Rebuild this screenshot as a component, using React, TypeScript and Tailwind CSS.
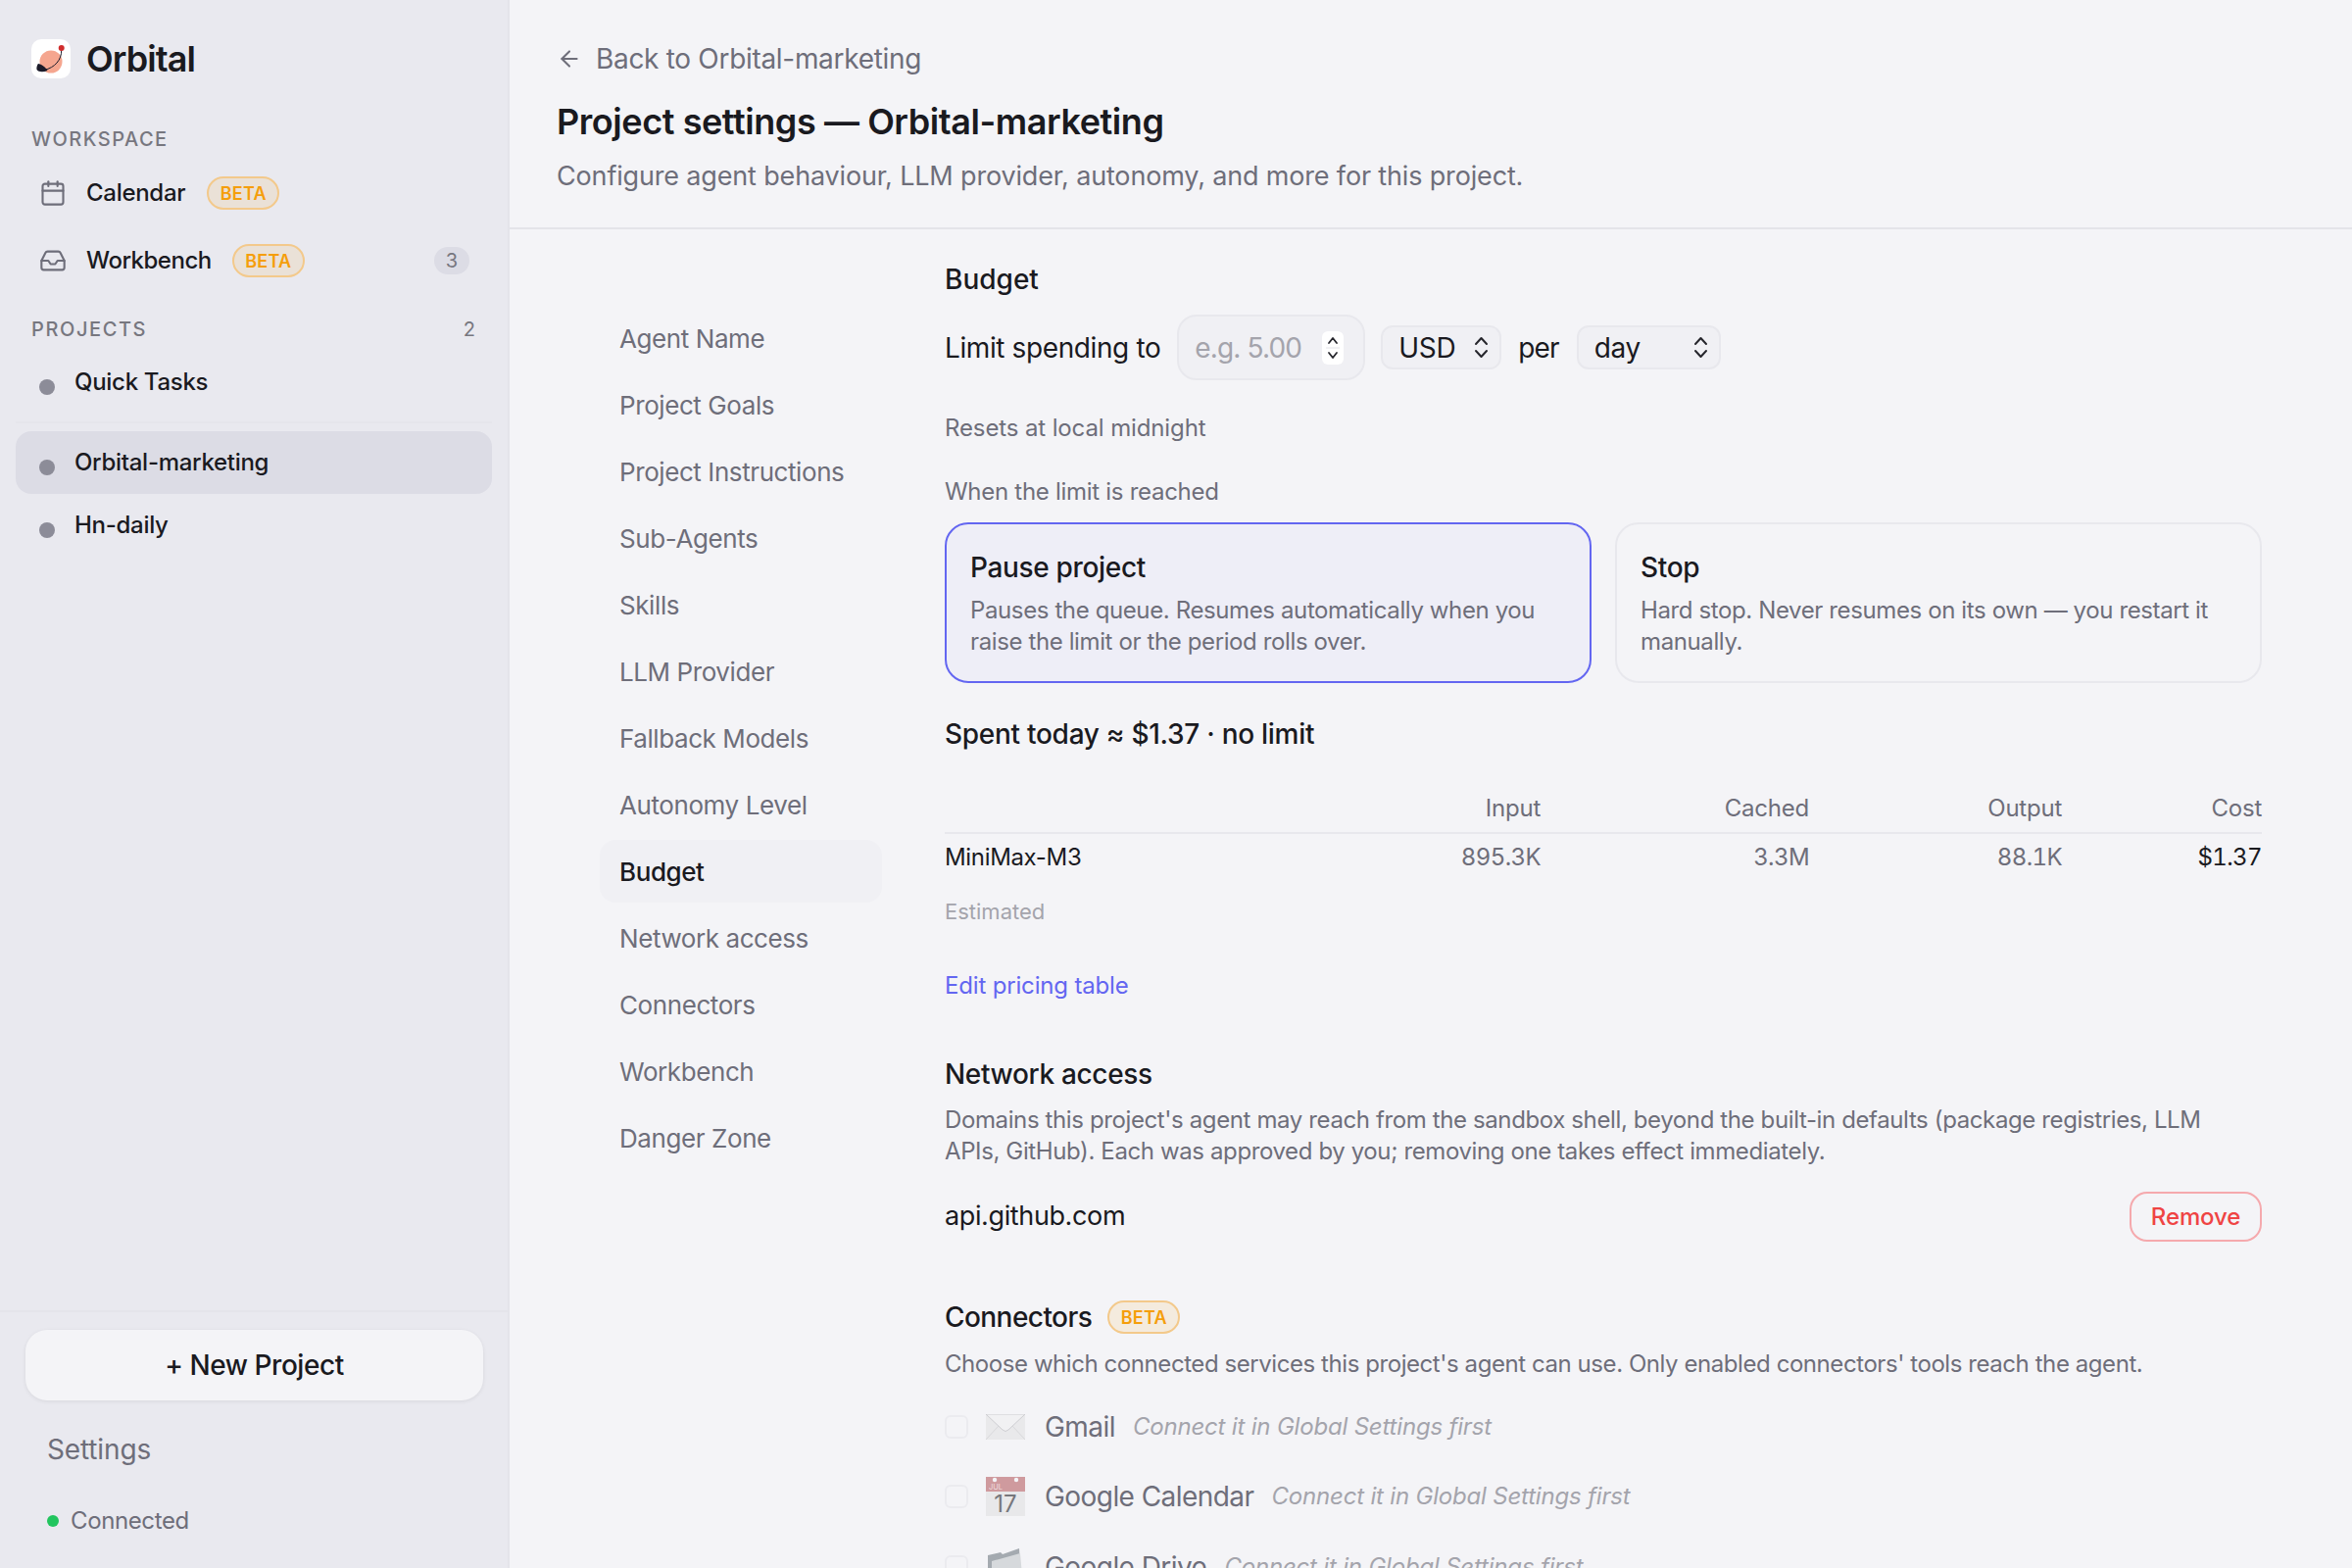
function Beta() {
  return (
    <span className="inline-flex h-[34px] w-[74px] items-center justify-center rounded-full border-2 border-[#f3c98b] bg-[#f59e0b]/10 text-[18px] font-semibold tracking-[0.01em] text-[#f59e0b]">
      BETA
    </span>
  );
}

function Logo() {
  return (
    <div className="h-10 w-10 shrink-0 rounded-[10px] bg-white">
      <svg viewBox="0 0 40 40" className="h-10 w-10">
        <circle cx="20" cy="23" r="11.5" fill="#f5a68f" />
        <path d="M30.7 11 C31 21 24 29 13 31.5" fill="none" stroke="#1b1b2a" strokeWidth="1" />
        <path d="M7 25 C10 25 15 29 16.5 32 C12 34 7 33.5 5.5 31 C5 29 6 26 7 25 Z" fill="#1b1b2a" />
        <circle cx="30.7" cy="9" r="3" fill="#d02c2c" />
      </svg>
    </div>
  );
}

function CalendarGlyph() {
  return (
    <svg viewBox="0 0 24 24" width="28" height="28" fill="none" stroke="#6e6e7a" strokeWidth="1.8" strokeLinecap="round" strokeLinejoin="round">
      <path d="M8 2v4" />
      <path d="M16 2v4" />
      <rect x="3" y="4" width="18" height="18" rx="2" />
      <path d="M3 10h18" />
    </svg>
  );
}

function InboxGlyph() {
  return (
    <svg viewBox="0 0 24 24" width="28" height="28" fill="none" stroke="#6e6e7a" strokeWidth="1.8" strokeLinecap="round" strokeLinejoin="round">
      <path d="M22 12h-6l-2 3h-4l-2-3H2" />
      <path d="M5.45 5.11 2 12v6a2 2 0 0 0 2 2h16a2 2 0 0 0 2-2v-6l-3.45-6.89A2 2 0 0 0 16.76 4H7.24a2 2 0 0 0-1.79 1.11z" />
    </svg>
  );
}

function ArrowLeftGlyph() {
  return (
    <svg viewBox="0 0 24 24" width="26" height="26" fill="none" stroke="#6e6e7a" strokeWidth="1.9" strokeLinecap="round" strokeLinejoin="round">
      <path d="m12 19-7-7 7-7" />
      <path d="M19 12H5" />
    </svg>
  );
}

function UpDown() {
  return (
    <svg viewBox="0 0 15 23" className="h-[23px] w-[15px] shrink-0" fill="none" stroke="#26262c" strokeWidth="2" strokeLinecap="round" strokeLinejoin="round">
      <path d="M2 8 L7.5 2 L13 8" />
      <path d="M2 15 L7.5 21 L13 15" />
    </svg>
  );
}

function ProjectRow({ name, active }: { name: string; active?: boolean }) {
  return (
    <div className={`mx-4 flex h-16 w-[486px] items-center gap-5 rounded-2xl pl-6 ${active ? "bg-[#dcdce5]" : ""}`}>
      <span className="mt-[10px] h-4 w-4 shrink-0 rounded-full bg-[#8c8c98]" />
      <span className="text-[24px] font-medium tracking-[-0.012em] text-[#1a1a1f]">{name}</span>
    </div>
  );
}

function NavItem({ label, active }: { label: string; active?: boolean }) {
  return (
    <div className="flex h-[68px] items-center">
      <div className={`flex h-16 w-full items-center rounded-2xl px-5 text-[26px] tracking-[-0.016em] ${active ? "bg-[#f0f0f4] font-medium text-[#1a1a1f]" : "text-[#6e6e7a]"}`}>
        {label}
      </div>
    </div>
  );
}

function Select({ label, className }: { label: string; className: string }) {
  return (
    <div className={`flex h-[45px] items-center justify-between rounded-xl border-2 border-[#e8e8ed] bg-[#f0f0f4] pl-4 pr-[11px] text-[28px] tracking-[-0.011em] text-[#1a1a1f] ${className}`}>
      <span>{label}</span>
      <UpDown />
    </div>
  );
}

function ModeCard({ title, desc, active }: { title: string; desc: string; active?: boolean }) {
  return (
    <div className={`h-[164px] w-[660px] rounded-[24px] border-2 px-6 pt-[26px] ${active ? "border-[#6366f1] bg-[#eeeef7]" : "border-[#e8e8ed]"}`}>
      <div className="text-[28px] leading-9 font-medium tracking-[-0.012em] text-[#1a1a1f]">{title}</div>
      <div className="mt-[10px] text-[24px] leading-8 tracking-[-0.016em] text-[#6e6e7a]">{desc}</div>
    </div>
  );
}

function MailIcon() {
  return (
    <svg viewBox="0 0 40 26" className="h-[26px] w-10">
      <rect width="40" height="26" fill="#e9e9eb" />
      <path d="M0 0 L17 16 Q20 19 23 16 L40 0 Z" fill="#f1f1f3" stroke="#cdcdd1" strokeWidth="1" />
      <path d="M0 26 L13 12 M40 26 L27 12" stroke="#d8d8db" strokeWidth="1" />
    </svg>
  );
}

function CalIcon() {
  return (
    <svg viewBox="0 0 40 40" className="h-10 w-10">
      <rect width="40" height="40" fill="#e8e8ea" />
      <rect width="40" height="15" fill="#cf9a9e" />
      <circle cx="9" cy="3" r="2.2" fill="#f4f4f7" />
      <circle cx="31" cy="3" r="2.2" fill="#f4f4f7" />
      <text x="3" y="13" fontSize="7.5" fill="#f0dfe0" fontFamily="Inter, sans-serif">JUL</text>
      <text x="20" y="36" textAnchor="middle" fontSize="24" fill="#77777c" fontFamily="Inter, sans-serif">17</text>
    </svg>
  );
}

function FolderIcon() {
  return (
    <svg viewBox="0 0 38 40" className="h-10 w-[38px]">
      <path d="M1 8 L14 5 L16 7 L33 1 L35 36 L1 40 Z" fill="#a4aab0" />
      <path d="M5 14 L34 6 L37 40 L5 40 Z" fill="#d6d9dc" />
    </svg>
  );
}

function ConnectorRow({ icon, name, className }: { icon: React.ReactNode; name: string; className: string }) {
  return (
    <div className={`flex h-10 items-center ${className}`}>
      <span className="h-6 w-6 shrink-0 rounded-md border-2 border-[#ebebef] bg-[#f4f4f7]" />
      <span className="ml-[18px] flex w-10 shrink-0 justify-center">{icon}</span>
      <span className="ml-5 text-[28px] tracking-[-0.02em] text-[#6e6e7a]">{name}</span>
      <span className="ml-[18px] text-[24px] tracking-[-0.008em] text-[#a4a4ac] italic">Connect it in Global Settings first</span>
    </div>
  );
}

export default function App() {
  const nav = ["Agent Name", "Project Goals", "Project Instructions", "Sub-Agents", "Skills", "LLM Provider", "Fallback Models", "Autonomy Level", "Budget", "Network access", "Connectors", "Workbench", "Danger Zone"];
  return (
    <div className="flex h-[1600px] w-[2400px] overflow-hidden bg-[#f4f4f7] font-['Inter',sans-serif] text-[#1a1a1f]">
      <aside className="flex h-full w-[520px] shrink-0 flex-col border-r-2 border-[#e4e4ea] bg-[#e9e9ef]">
        <div className="mt-10 flex items-center gap-4 pl-8">
          <Logo />
          <span className="text-[36px] leading-10 font-semibold tracking-[-0.025em] text-[#1a1a1f]">Orbital</span>
        </div>
        <div className="mt-[50px] pl-8 text-[20px] leading-6 font-medium tracking-[0.075em] text-[#77777f]">WORKSPACE</div>
        <div className="mt-[11px] flex h-16 items-center pl-10">
          <CalendarGlyph />
          <span className="ml-5 text-[24px] font-medium tracking-[-0.012em]">Calendar</span>
          <span className="ml-[22px]"><Beta /></span>
        </div>
        <div className="mt-[5px] flex h-16 items-center pl-10 pr-[39px]">
          <InboxGlyph />
          <span className="ml-5 text-[24px] font-medium tracking-[-0.02em]">Workbench</span>
          <span className="ml-[21px]"><Beta /></span>
          <span className="ml-auto flex h-7 w-9 items-center justify-center rounded-full bg-[#dcdce5] text-[20px] text-[#77777f]">3</span>
        </div>
        <div className="mt-[26px] flex items-center justify-between pl-8 pr-[33px] text-[20px] leading-6 font-medium tracking-[0.08em] text-[#77777f]">
          <span>PROJECTS</span>
          <span className="font-normal tracking-normal">2</span>
        </div>
        <div className="mt-[10px]"><ProjectRow name="Quick Tasks" /></div>
        <div className="mx-4 mt-2 h-0.5 w-[486px] bg-[#e5e5eb]" />
        <div className="mt-2"><ProjectRow name="Orbital-marketing" active /></div>
        <ProjectRow name="Hn-daily" />
        <div className="mt-auto border-t-2 border-[#e4e4ea] pb-[32px]">
          <button className="mx-[26px] mt-[18px] block h-[72px] w-[467px] rounded-[22px] bg-[#f4f4f7] text-[28px] font-medium tracking-[-0.016em] text-[#1a1a1f] shadow-[0_1px_4px_rgba(0,0,0,0.08)]">
            + New Project
          </button>
          <div className="mt-[32px] pl-[48px] text-[28px] leading-9 tracking-[-0.005em] text-[#6e6e7a]">Settings</div>
          <div className="mt-[39px] flex items-center gap-3 pl-[48px] text-[24px] leading-8 tracking-[-0.016em] text-[#6e6e7a]">
            <span className="h-3 w-3 rounded-full bg-[#22c55e]" />
            Connected
          </div>
        </div>
      </aside>

      <main className="flex min-w-0 flex-1 flex-col">
        <header className="h-[234px] shrink-0 border-b-2 border-[#e4e4e9] pl-12">
          <div className="flex items-center gap-[14px] pt-10 text-[28px] leading-10 tracking-[-0.011em] text-[#6e6e7a]">
            <ArrowLeftGlyph />
            <span>Back to Orbital-marketing</span>
          </div>
          <h1 className="mt-[20px] text-[36px] leading-[48px] font-semibold tracking-[-0.012em] text-[#1a1a1f]">Project settings — Orbital-marketing</h1>
          <p className="mt-[14px] text-[27px] leading-9 tracking-[-0.006em] text-[#6e6e7a]">Configure agent behaviour, LLM provider, autonomy, and more for this project.</p>
        </header>

        <div className="flex min-h-0 flex-1 overflow-hidden pl-[92px]">
          <nav className="w-[288px] shrink-0 pt-[77px]">
            {nav.map((n) => <NavItem key={n} label={n} active={n === "Budget"} />)}
          </nav>
          <section className="ml-16 w-[1344px] shrink-0 pt-[33px]">
            <h2 className="text-[28px] leading-9 font-medium">Budget</h2>
            <div className="mt-[18px] flex items-center text-[28px] tracking-[-0.014em]">
              <span>Limit spending to</span>
              <div className="ml-[17px] flex h-[67px] w-[192px] items-center justify-between rounded-[20px] border-2 border-[#e8e8ed] bg-[#f0f0f4] pl-[16px] pr-[20px]">
                <span className="tracking-[-0.03em] text-[#a4a4ac]">e.g. 5.00</span>
                <span className="flex h-[34px] w-[22px] items-center justify-center rounded-md bg-white">
                  <svg viewBox="0 0 14 30" className="h-[30px] w-[14px]" fill="none" stroke="#26262c" strokeWidth="1.8" strokeLinecap="round" strokeLinejoin="round">
                    <path d="M3 10 L7 5 L11 10" />
                    <path d="M3 20 L7 25 L11 20" />
                    <path d="M0 15 H14" stroke="#e4e4e8" strokeWidth="1" />
                  </svg>
                </span>
              </div>
              <Select label="USD" className="ml-4 w-[123px]" />
              <span className="ml-[17px] tracking-[-0.03em]">per</span>
              <Select label="day" className="ml-[18px] w-[147px]" />
            </div>
            <p className="mt-[33px] text-[24px] leading-8 tracking-[-0.005em] text-[#6e6e7a]">Resets at local midnight</p>
            <p className="mt-[33px] text-[24px] leading-8 tracking-[-0.012em] text-[#6e6e7a]">When the limit is reached</p>
            <div className="mt-[15px] flex gap-6">
              <ModeCard active title="Pause project" desc="Pauses the queue. Resumes automatically when you raise the limit or the period rolls over." />
              <ModeCard title="Stop" desc="Hard stop. Never resumes on its own — you restart it manually." />
            </div>
            <div className="mt-[34px] text-[28px] leading-9 font-medium tracking-[-0.01em]">Spent today ≈ $1.37 · no limit</div>
            <div className="mt-[42px] grid grid-cols-[300px_308px_274px_258px_204px] border-b-2 border-[#e8e8ed] pb-2 text-right text-[24px] leading-8 tracking-[-0.01em] text-[#6e6e7a]">
              <span />
              <span>Input</span>
              <span>Cached</span>
              <span>Output</span>
              <span>Cost</span>
            </div>
            <div className="mt-2 grid grid-cols-[300px_308px_274px_258px_204px] text-right text-[24px] leading-8 text-[#6e6e7a]">
              <span className="text-left tracking-[-0.014em] text-[#1a1a1f]">MiniMax-M3</span>
              <span className="tracking-[-0.025em] tabular-nums">895.3K</span>
              <span className="tracking-[-0.025em] tabular-nums">3.3M</span>
              <span className="tracking-[-0.025em] tabular-nums">88.1K</span>
              <span className="tracking-[-0.025em] text-[#1a1a1f] tabular-nums">$1.37</span>
            </div>
            <p className="mt-[25px] text-[22px] leading-7 text-[#a4a4ac]">Estimated</p>
            <p className="mt-[46px] text-[24px] leading-8 tracking-[-0.007em] text-[#6366f1]">Edit pricing table</p>
            <h2 className="mt-[56px] text-[28px] leading-9 font-medium tracking-[-0.012em]">Network access</h2>
            <p className="mt-[13px] max-w-[1320px] text-[24px] leading-8 tracking-[-0.016em] text-[#6e6e7a]">Domains this project's agent may reach from the sandbox shell, beyond the built-in defaults (package registries, LLM APIs, GitHub). Each was approved by you; removing one takes effect immediately.</p>
            <div className="mt-[25px] flex h-[51px] items-center justify-between">
              <span className="text-[27px] tracking-[-0.014em]">api.github.com</span>
              <span className="flex h-[51px] w-[135px] items-center justify-center rounded-[18px] border-2 border-[#f5a9ad] text-[24px] font-medium tracking-[-0.005em] text-[#ef4444]">Remove</span>
            </div>
            <div className="mt-[59px] flex h-9 items-center gap-4">
              <h2 className="text-[28px] font-medium tracking-[-0.02em]">Connectors</h2>
              <Beta />
            </div>
            <p className="mt-[14px] text-[24px] leading-8 tracking-[-0.018em] text-[#6e6e7a]">Choose which connected services this project's agent can use. Only enabled connectors' tools reach the agent.</p>
            <ConnectorRow icon={<MailIcon />} name="Gmail" className="mt-[28px]" />
            <ConnectorRow icon={<CalIcon />} name="Google Calendar" className="mt-[31px]" />
            <ConnectorRow icon={<FolderIcon />} name="Google Drive" className="mt-[32px]" />
          </section>
        </div>
      </main>
    </div>
  );
}
